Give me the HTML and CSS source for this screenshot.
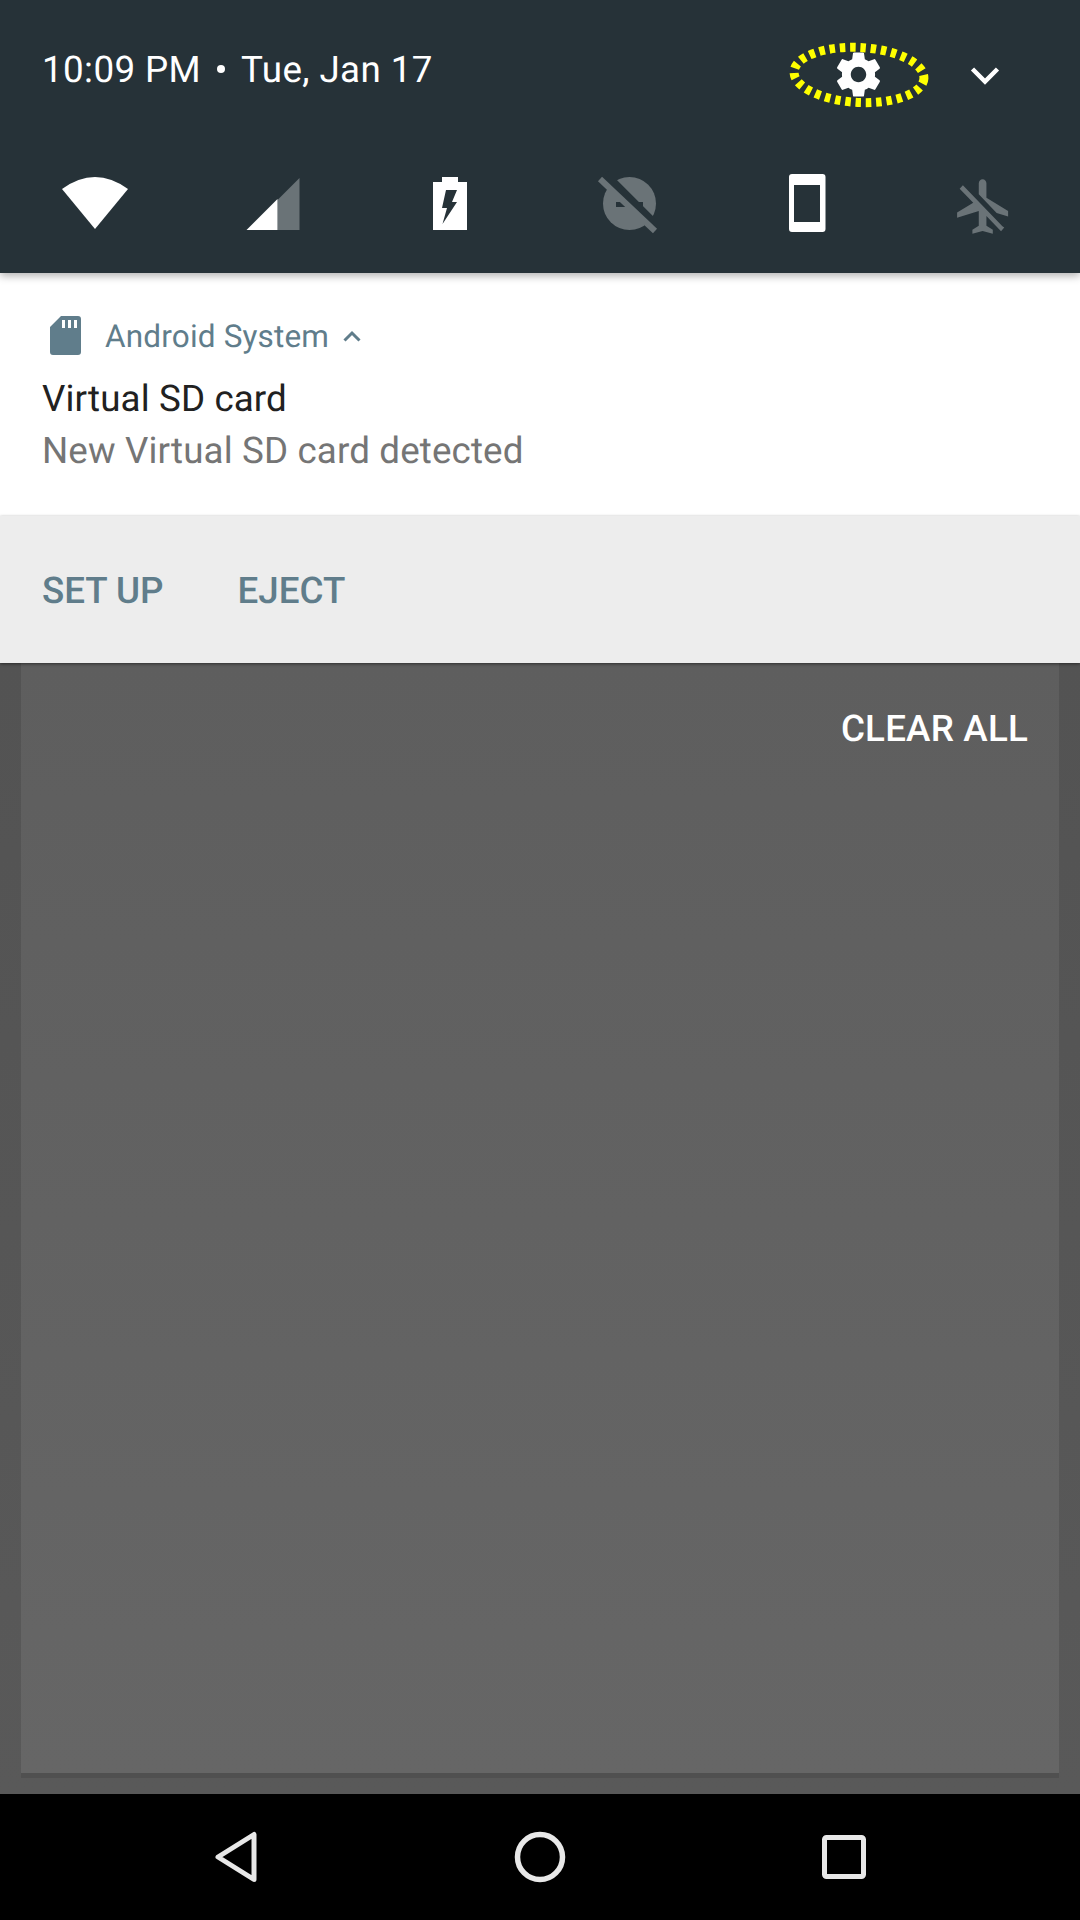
FILE: index.html
```html
<!DOCTYPE html>
<html lang="en">
  <head>
    <meta charset="utf-8" />
    <title>Notification shade</title>
    <link rel="stylesheet" href="styles.css">
  </head>
  <body>
    <header class="qs">
      <div class="qs-top">
        <div class="clock">
          <span>10:09 PM</span>
          <span class="clock-dot"></span>
          <span>Tue, Jan 17</span>
        </div>
        <div class="gear">
          <svg class="gear-icon" viewBox="0 0 24 24">
            <path fill="#fff" d="M19.43 12.98c.04-.32.07-.64.07-.98s-.03-.66-.07-.98l2.11-1.65c.19-.15.24-.42.12-.64l-2-3.46c-.12-.22-.39-.3-.61-.22l-2.49 1c-.52-.4-1.08-.73-1.69-.98l-.38-2.65C14.46 2.18 14.25 2 14 2h-4c-.25 0-.46.18-.49.42l-.38 2.65c-.61.25-1.17.59-1.69.98l-2.49-1c-.23-.09-.49 0-.61.22l-2 3.46c-.13.22-.07.49.12.64l2.11 1.65c-.04.32-.07.65-.07.98s.03.66.07.98l-2.11 1.65c-.19.15-.24.42-.12.64l2 3.46c.12.22.39.3.61.22l2.49-1c.52.4 1.08.73 1.69.98l.38 2.65c.03.24.24.42.49.42h4c.25 0 .46-.18.49-.42l.38-2.65c.61-.25 1.17-.59 1.69-.98l2.49 1c.23.09.49 0 .61-.22l2-3.46c.12-.22.07-.49-.12-.64l-2.11-1.65zM12 15.5c-1.93 0-3.5-1.57-3.5-3.5s1.57-3.5 3.5-3.5 3.5 1.57 3.5 3.5-1.57 3.5-3.5 3.5z"/>
          </svg>
          <svg class="gear-ring" viewBox="0 0 150 74">
            <ellipse cx="75" cy="37" rx="65" ry="27.5" transform="rotate(3 75 37)" fill="none" stroke="#ffff00" stroke-width="9" stroke-dasharray="5.5 4.8"/>
          </svg>
        </div>
        <svg class="chevron" viewBox="0 0 30 20">
          <path d="M2.5 3 L15 15.5 L27.5 3" fill="none" stroke="#fff" stroke-width="4.5"/>
        </svg>
      </div>
      <div class="tiles">
        <svg class="tile" viewBox="0 0 72 72"><path fill="#fff" d="M3 21Q36 -3 69 21L36 61Z"/></svg>
        <svg class="tile" viewBox="0 0 72 72">
          <g transform="translate(1 0)">
            <path fill="#6a7377" d="M62.5 10V62H40.5V32Z"/>
            <path fill="#fff" d="M40.5 31V62H9.5Z"/>
          </g>
        </svg>
        <svg class="tile" viewBox="0 0 72 72">
          <path fill="#fff" fill-rule="evenodd" d="M28 9H44V14H53V62H19V14H28ZM32 22L28 40H33L28.5 56L43 34H38L43 22Z"/>
        </svg>
        <svg class="tile" viewBox="0 0 72 72">
          <g transform="translate(1 0)">
            <circle cx="37.5" cy="35.5" r="26.5" fill="#6a7377"/>
            <rect x="24" y="34" width="27" height="5" fill="#263238"/>
            <path d="M10 9L64 63" stroke="#263238" stroke-width="11" transform="translate(2 -2)"/>
            <path d="M8 11L63 63" stroke="#6a7377" stroke-width="6"/>
          </g>
        </svg>
        <svg class="tile" viewBox="0 0 72 72">
          <path fill="#fff" fill-rule="evenodd" transform="translate(2 0)" d="M21 6H51.5Q54.5 6 54.5 9V61Q54.5 64 51.5 64H21Q18 64 18 61V9Q18 6 21 6ZM23 17V54H49V17Z"/>
        </svg>
        <svg class="tile" viewBox="0 0 72 72">
          <path fill="#6a7377" transform="translate(6 6) scale(2.55 2.65)" d="M10.5 7.67V3.5c0-.83.67-1.5 1.5-1.5s1.5.67 1.5 1.5V9l8.5 5v2l-4.49-1.32-7.01-7.01zm9.27 12.06L4.27 4.27 3 5.54l5.33 5.33L2 14.5v2l8.5-2.5V19.5L8 21v1.5l4-1 4 1V21l-2.5-1.5v-3.67l5.73 5.73 1.27-1.33z"/>
        </svg>
      </div>
    </header>

    <section class="notif">
      <div class="notif-head">
        <svg class="sd-icon" viewBox="0 0 31 39">
          <path fill="#607d8b" fill-rule="evenodd" d="M11 0H28Q31 0 31 3V36Q31 39 28 39H3Q0 39 0 36V11ZM12 4V12H15V4ZM18 4V12H21V4ZM24 4V12H27V4Z"/>
        </svg>
        <span class="app-name">Android System</span>
        <svg class="caret" viewBox="0 0 18 12">
          <path d="M1.5 10.5L9 3L16.5 10.5" fill="none" stroke="#607d8b" stroke-width="3"/>
        </svg>
      </div>
      <div class="notif-title">Virtual SD card</div>
      <div class="notif-text">New Virtual SD card detected</div>
    </section>

    <section class="actions">
      <span class="action">SET UP</span>
      <span class="action">EJECT</span>
    </section>

    <main class="shade">
      <div class="shade-card">
        <span class="clear-all">CLEAR ALL</span>
      </div>
    </main>

    <nav class="navbar">
      <svg class="nav-icon" viewBox="0 0 60 60">
        <path d="M48 7.5V52.5L12 30Z" fill="none" stroke="#e8e8e8" stroke-width="5" stroke-linejoin="round"/>
      </svg>
      <svg class="nav-icon" viewBox="0 0 60 60">
        <circle cx="30" cy="30" r="22.5" fill="none" stroke="#e8e8e8" stroke-width="5.5"/>
      </svg>
      <svg class="nav-icon" viewBox="0 0 60 60">
        <rect x="10.5" y="10.5" width="39" height="39" rx="2" fill="none" stroke="#e8e8e8" stroke-width="5"/>
      </svg>
    </nav>
  </body>
</html>
```

FILE: styles.css
```css
* {
  box-sizing: border-box;
}

body {
  margin: 0;
  width: 1080px;
  height: 1920px;
  display: flex;
  flex-direction: column;
  overflow: hidden;
  font-family: Roboto, "Liberation Sans", sans-serif;
  text-rendering: geometricPrecision;
  background: #555555;
}

.qs {
  height: 273px;
  background: #263238;
  position: relative;
  z-index: 2;
  box-shadow: 0 3px 8px rgba(0, 0, 0, 0.3);
}

.qs-top {
  height: 148px;
  display: flex;
  align-items: center;
  padding: 0 80px 0 42px;
}

.clock {
  display: flex;
  align-items: center;
  color: #ffffff;
  font-size: 36.75px;
  letter-spacing: 0.4px;
  margin-top: -10px;
}

.clock-dot {
  width: 8px;
  height: 8px;
  border-radius: 50%;
  background: #ffffff;
  margin: 0 16px;
}

.gear {
  position: relative;
  width: 53px;
  height: 53px;
  margin-left: auto;
  margin-right: 85px;
}

.gear-icon {
  display: block;
  width: 53px;
  height: 53px;
}

.gear-ring {
  position: absolute;
  left: -48px;
  top: -10px;
  width: 150px;
  height: 74px;
}

.chevron {
  width: 30px;
  height: 20px;
  margin-top: 4px;
}

.tiles {
  display: flex;
  justify-content: space-between;
  padding: 20px 62px 0 59px;
}

.tile {
  width: 72px;
  height: 72px;
}

.notif {
  height: 243px;
  background: #ffffff;
  padding: 43px 42px 0;
}

.notif-head {
  display: flex;
  align-items: center;
  height: 39px;
}

.sd-icon {
  width: 31px;
  height: 39px;
  margin-left: 8px;
}

.app-name {
  color: #607d8b;
  font-size: 31.5px;
  letter-spacing: 0.17px;
  margin-left: 24px;
  padding-top: 2px;
}

.caret {
  width: 18px;
  height: 12px;
  margin-left: 14px;
}

.notif-title {
  color: #212121;
  font-size: 36.75px;
  letter-spacing: 0.12px;
  line-height: 52px;
  margin-top: 18px;
}

.notif-text {
  color: #757575;
  font-size: 36.75px;
  letter-spacing: 0.13px;
  line-height: 52px;
}

.actions {
  height: 147px;
  background: #ededed;
  display: flex;
  align-items: center;
  gap: 74px;
  padding: 2px 42px 0;
  position: relative;
  z-index: 1;
  box-shadow: 0 1px 3px rgba(0, 0, 0, 0.5);
}

.action {
  color: #607d8b;
  font-size: 36.75px;
  font-weight: 500;
}

.shade {
  flex: 1;
  padding: 0 21px 16px;
  background: linear-gradient(#535353, #595959);
}

.shade-card {
  height: 100%;
  display: flex;
  justify-content: flex-end;
  align-items: flex-start;
  padding: 44px 31px 0 0;
  background: linear-gradient(#5e5e5e, #666666);
  border-bottom: 5px solid #505050;
}

.clear-all {
  color: #ffffff;
  font-size: 36.75px;
  font-weight: 500;
  letter-spacing: 0.2px;
}

.navbar {
  height: 126px;
  background: #000000;
  display: flex;
  justify-content: center;
  align-items: center;
  gap: 244px;
}

.nav-icon {
  width: 60px;
  height: 60px;
}
```
